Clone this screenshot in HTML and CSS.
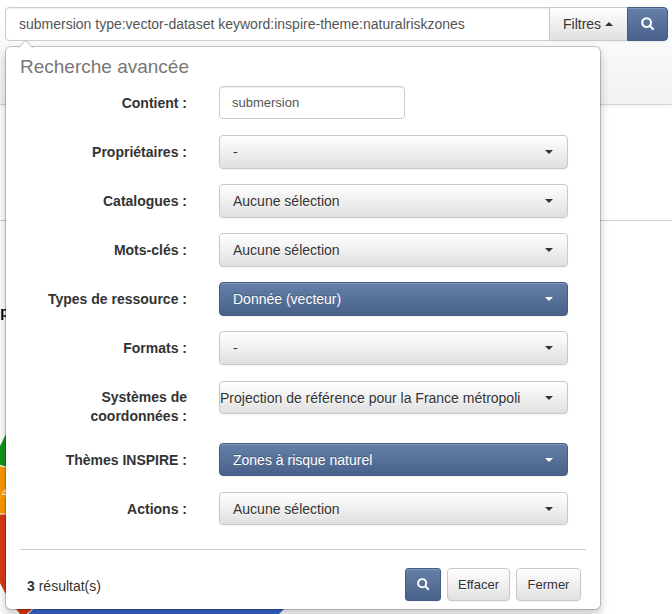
FILE: index.html
```html
<!DOCTYPE html>
<html lang="fr">
<head>
<meta charset="utf-8">
<title>Recherche avancée</title>
<link rel="stylesheet" href="styles.css">
</head>
<body>
<div class="page">
  <svg class="backdrop" viewBox="0 0 672 614" aria-hidden="true">
    <path fill="#109618" d="M9 428L0 446V465L9 468Z"/>
    <path fill="#f90" d="M0 466L9 468V514H0Z"/>
    <path fill="#dc3912" d="M0 514H9V595H40V605L27 614H20Q7 598 0 583Z"/>
    <path fill="#3366cc" d="M40 603H290L279 614H28Z"/>
    <path fill="none" stroke="#fff" d="M0 465.5L9 468M0 514H9M40 603L27 614"/>
    <text class="slice" x="1.5" y="497">4</text>
    <text class="chart-title" x="-7.5" y="317">ep</text>
  </svg>
  <header class="top">
    <form class="search">
      <div class="query"><span class="t-query">submersion type:vector-dataset keyword:inspire-theme:naturalriskzones</span></div>
      <div class="btn filter"><span class="t-filter">Filtres</span><i class="caret up"></i></div>
      <div class="btn primary go"><svg class="icon" viewBox="0 0 14 14"><circle cx="5.6" cy="5.6" r="4.4"/><path d="M9 9L12.7 12.7"/></svg></div>
    </form>
  </header>
  <hr class="rule">
  <section class="panel">
    <h1><span class="t-title">Recherche avancée</span></h1>
    <div class="fields">
      <label>Contient :</label><div class="input"><span>submersion</span></div>
      <label>Propriétaires :</label><div class="btn select"><span>-</span><i class="caret"></i></div>
      <label>Catalogues :</label><div class="btn select"><span>Aucune sélection</span><i class="caret"></i></div>
      <label>Mots-clés :</label><div class="btn select"><span>Aucune sélection</span><i class="caret"></i></div>
      <label>Types de ressource :</label><div class="btn select primary"><span class="t-type">Donnée (vecteur)</span><i class="caret"></i></div>
      <label>Formats :</label><div class="btn select"><span>-</span><i class="caret"></i></div>
      <label class="low">Systèmes de<br>coordonnées :</label><div class="btn select short low wide"><span class="t-proj">Projection de référence pour la France métropoli</span><i class="caret"></i></div>
      <label>Thèmes INSPIRE :</label><div class="btn select short primary"><span class="t-theme">Zones à risque naturel</span><i class="caret"></i></div>
      <label>Actions :</label><div class="btn select short"><span>Aucune sélection</span><i class="caret"></i></div>
    </div>
    <footer class="actions">
      <p><b>3</b> résultat(s)</p>
      <div class="btn primary find"><svg class="icon" viewBox="0 0 14 14"><circle cx="5.6" cy="5.6" r="4.4"/><path d="M9 9L12.7 12.7"/></svg></div>
      <div class="btn clear">Effacer</div>
      <div class="btn close">Fermer</div>
    </footer>
  </section>
</div>
</body>
</html>
```
FILE: styles.css
```css
* { box-sizing: border-box; }
body { margin: 0; background: #fff; color: #333; font: 14px/20px "Liberation Sans", Arial, sans-serif; }
.page { position: relative; width: 672px; height: 614px; overflow: hidden; }
.backdrop { position: absolute; left: 0; top: 0; width: 672px; height: 614px; }
.slice { font-size: 11px; fill: #fff; }
.chart-title { font-size: 14px; font-weight: bold; fill: #000; }
.top { height: 105px; padding: 7px 4px 0 5px; background: linear-gradient(#fff, #f2f2f2); border-bottom: 1px solid #d4d4d4; box-shadow: 0 1px 4px rgba(0,0,0,.065); }
.search { display: flex; }
.query { width: 545px; height: 34px; padding: 0 13px; line-height: 32px; border: 1px solid #ccc; border-radius: 4px 0 0 4px; background: #fff; color: #555; white-space: nowrap; box-shadow: inset 0 1px 1px rgba(0,0,0,.075); }
.btn { display: flex; align-items: center; height: 34px; border: 1px solid #c9c9c9; border-radius: 4px; background: linear-gradient(#fff, #e0e0e0); box-shadow: inset 0 1px 0 rgba(255,255,255,.2), 0 1px 2px rgba(0,0,0,.05); text-shadow: 0 1px 1px rgba(255,255,255,.75); white-space: nowrap; }
.primary { background: linear-gradient(#6580a8, #49618a); border-color: #435c81; color: #fff; text-shadow: 0 -1px 0 rgba(0,0,0,.25); }
.filter { width: 79px; margin-left: -1px; padding-left: 13px; border-radius: 0; }
.go { width: 41px; margin-left: -1px; border-radius: 0 4px 4px 0; justify-content: center; }
.icon { width: 14px; height: 14px; fill: none; stroke: #fff; stroke-width: 2.1; }
.caret { border: 4px solid transparent; border-top-color: #333; border-bottom: 0; }
.caret.up { border: 4px solid transparent; border-bottom-color: #333; border-top: 0; margin-left: 4px; }
.primary .caret { border-top-color: #fff; }
.rule { height: 1px; margin: 115px 0 0; border: 0; background: #ccccdc; }
.panel { position: absolute; left: 5px; top: 46px; width: 596px; height: 564px; padding: 0 14px; border: 1px solid rgba(0,0,0,.2); border-radius: 6px; background: #fff; background-clip: padding-box; box-shadow: 0 5px 10px rgba(0,0,0,.2); }
.panel::before { content: ""; position: absolute; left: 14px; top: -5px; width: 10px; height: 10px; transform: rotate(45deg); background: linear-gradient(135deg, #fff 55%, transparent 55%); border: solid #ccc; border-width: 1px 0 0 1px; }
h1 { margin: 0; height: 39px; font-size: 19px; line-height: 39px; font-weight: normal; color: #777; }
.fields { display: grid; grid-template-columns: 167px 349px; grid-template-rows: repeat(6, 49px) 63px 49px 65px; column-gap: 32px; align-items: start; }
.fields label { padding-top: 8px; text-align: right; font-weight: bold; line-height: 19px; }
.input { width: 186px; height: 33px; padding: 0 12px; border: 1px solid #ccc; border-radius: 4px; font-size: 13px; line-height: 31px; color: #555; box-shadow: inset 0 1px 1px rgba(0,0,0,.075); }
.select { justify-content: space-between; padding: 0 14px 0 13px; }
.short { height: 33px; }
.fields .btn.low { margin-top: 1px; }
.wide { padding-left: 0; }
.actions { display: flex; width: 566px; margin-top: -8px; padding: 18px 5px 0 7px; border-top: 1px solid #ccc; }
.actions p { margin: 8px auto 0 0; }
.actions .btn { height: 33px; margin-left: 6px; justify-content: center; font-size: 13px; }
.actions .find { width: 36px; border-radius: 3px; }
.find .icon { width: 13px; height: 13px; }
.actions .clear { width: 63px; }
.actions .close { width: 65px; }
```
